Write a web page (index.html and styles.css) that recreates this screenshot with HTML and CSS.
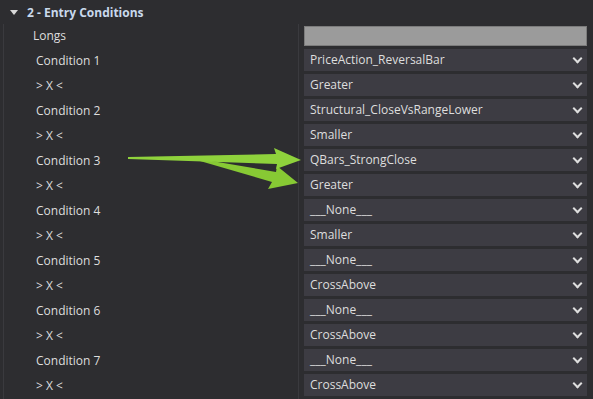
FILE: index.html
```html
<!DOCTYPE html>
<html lang="en">
<head>
  <meta charset="UTF-8">
  <title>Entry Conditions</title>
  <link rel="stylesheet" href="styles.css">
</head>
<body>
  <div class="panel">
    <div class="category">
      <span class="caret"></span>
      <span class="category-title">2 - Entry Conditions</span>
    </div>

    <div class="grid">
      <div class="label first">Longs</div>
      <div class="value"><div class="textbox"></div></div>

      <div class="label">Condition 1</div>
      <div class="value"><div class="combo">PriceAction_ReversalBar</div></div>
      <div class="label">&gt; X &lt;</div>
      <div class="value"><div class="combo">Greater</div></div>

      <div class="label">Condition 2</div>
      <div class="value"><div class="combo">Structural_CloseVsRangeLower</div></div>
      <div class="label">&gt; X &lt;</div>
      <div class="value"><div class="combo">Smaller</div></div>

      <div class="label">Condition 3</div>
      <div class="value"><div class="combo">QBars_StrongClose</div></div>
      <div class="label">&gt; X &lt;</div>
      <div class="value"><div class="combo">Greater</div></div>

      <div class="label">Condition 4</div>
      <div class="value"><div class="combo">___None___</div></div>
      <div class="label">&gt; X &lt;</div>
      <div class="value"><div class="combo">Smaller</div></div>

      <div class="label">Condition 5</div>
      <div class="value"><div class="combo">___None___</div></div>
      <div class="label">&gt; X &lt;</div>
      <div class="value"><div class="combo">CrossAbove</div></div>

      <div class="label">Condition 6</div>
      <div class="value"><div class="combo">___None___</div></div>
      <div class="label">&gt; X &lt;</div>
      <div class="value"><div class="combo">CrossAbove</div></div>

      <div class="label">Condition 7</div>
      <div class="value"><div class="combo">___None___</div></div>
      <div class="label">&gt; X &lt;</div>
      <div class="value"><div class="combo">CrossAbove</div></div>
    </div>

    <!-- annotation arrows pointing at condition 3 -->
    <svg class="arrows" width="593" height="399" viewBox="0 0 593 399">
      <polygon points="200,159 276,172 277,166 298,183 268,189 272,182 200,161" fill="#87c934"/>
      <polygon points="128,157 276,154 274,148 301,160 276,169 277,164 128,159" fill="#8fd23c"/>
    </svg>
  </div>
</body>
</html>
```

FILE: styles.css
```css
body {
  margin: 0;
  background: #2d2d30;
  font-family: "Open Sans", "Noto Sans", sans-serif;
  font-size: 12px;
  color: #dedede;
  overflow: hidden;
}

.panel {
  position: relative;
  width: 593px;
  height: 399px;
}

.category {
  display: flex;
  align-items: center;
  height: 24px;
  padding-left: 10px;
  gap: 9px;
}

.caret {
  width: 0;
  height: 0;
  border-left: 4px solid transparent;
  border-right: 4px solid transparent;
  border-top: 5px solid #d8d8d8;
}

.category-title {
  font-weight: bold;
  color: #c9d9ec;
  font-size: 12px;
}

.grid {
  display: grid;
  grid-template-columns: 295px 1fr;
  grid-auto-rows: 25px;
  margin-left: 3px;
  border-left: 1px solid #3a3a3e;
}

.label {
  display: flex;
  align-items: center;
  padding-left: 32px;
  padding-bottom: 2px;
  border-right: 1px solid #3a3a3e;
}

.label.first {
  padding-left: 29px;
}

.value {
  padding: 0 6px 3px 5px;
}

.textbox {
  height: 18px;
  margin-top: 2px;
  background: #9b9b9b;
  border: 1px solid #7c7c7c;
}

.combo {
  display: flex;
  align-items: center;
  height: 22px;
  padding-left: 6px;
  padding-bottom: 1px;
  box-sizing: border-box;
  background: #3d3c43;
  position: relative;
}

.combo::after {
  content: "";
  position: absolute;
  right: 6px;
  top: 6px;
  width: 5px;
  height: 5px;
  border-right: 2px solid #dedede;
  border-bottom: 2px solid #dedede;
  transform: rotate(45deg);
}

.arrows {
  position: absolute;
  top: 0;
  left: 0;
  pointer-events: none;
}
```
